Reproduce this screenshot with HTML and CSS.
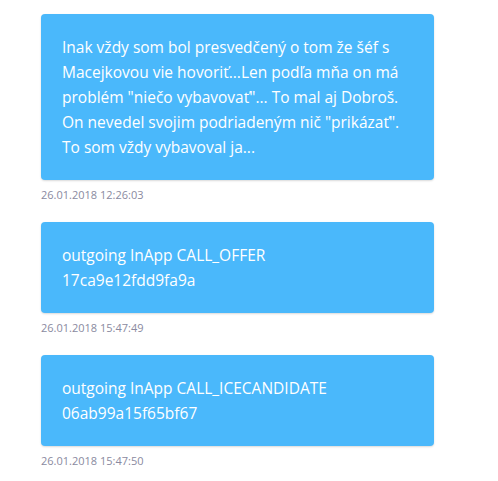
FILE: index.html
```html
<!DOCTYPE html>
<html lang="en">

<head>
    <meta charset="UTF-8">
    <meta name="viewport" content="width=device-width, initial-scale=1.0">
    <title>Messages</title>
    <link rel="stylesheet" href="styles.css">
</head>

<body>

    <div class="messages">
        <div class="message">
            <div class="bubble">Inak vždy som bol presvedčený o tom že šéf s Macejkovou vie hovoriť...Len podľa mňa on má problém "niečo vybavovať"... To mal aj Dobroš. On nevedel svojim podriadeným nič "prikázať". To som vždy vybavoval ja...</div>
            <div class="time">26.01.2018 12:26:03</div>
        </div>

        <div class="message">
            <div class="bubble">outgoing InApp CALL_OFFER<br>17ca9e12fdd9fa9a</div>
            <div class="time">26.01.2018 15:47:49</div>
        </div>

        <div class="message">
            <div class="bubble">outgoing InApp CALL_ICECANDIDATE<br>06ab99a15f65bf67</div>
            <div class="time">26.01.2018 15:47:50</div>
        </div>
    </div>

</body>

</html>
```

FILE: styles.css
```css
/* Basic styling */
body {
    font-family: "Open Sans", Arial, sans-serif;
    background: #ffffff;
    margin: 0;
}

.messages {
    display: flex;
    flex-direction: column;
    gap: 20px;
    padding: 14px 64px 0 41px;
}

.bubble {
    padding: 21px 21px 20px 21px;
    background-color: #4ab8fb;
    color: #ffffff;
    font-size: 15.5px;
    line-height: 25px;
    border-radius: 4px;
    box-shadow: 0 1px 2px rgba(0, 0, 0, 0.15);
}

.time {
    margin-top: 8px;
    font-size: 11px;
    line-height: 14px;
    color: #8a8aa0;
}
```
